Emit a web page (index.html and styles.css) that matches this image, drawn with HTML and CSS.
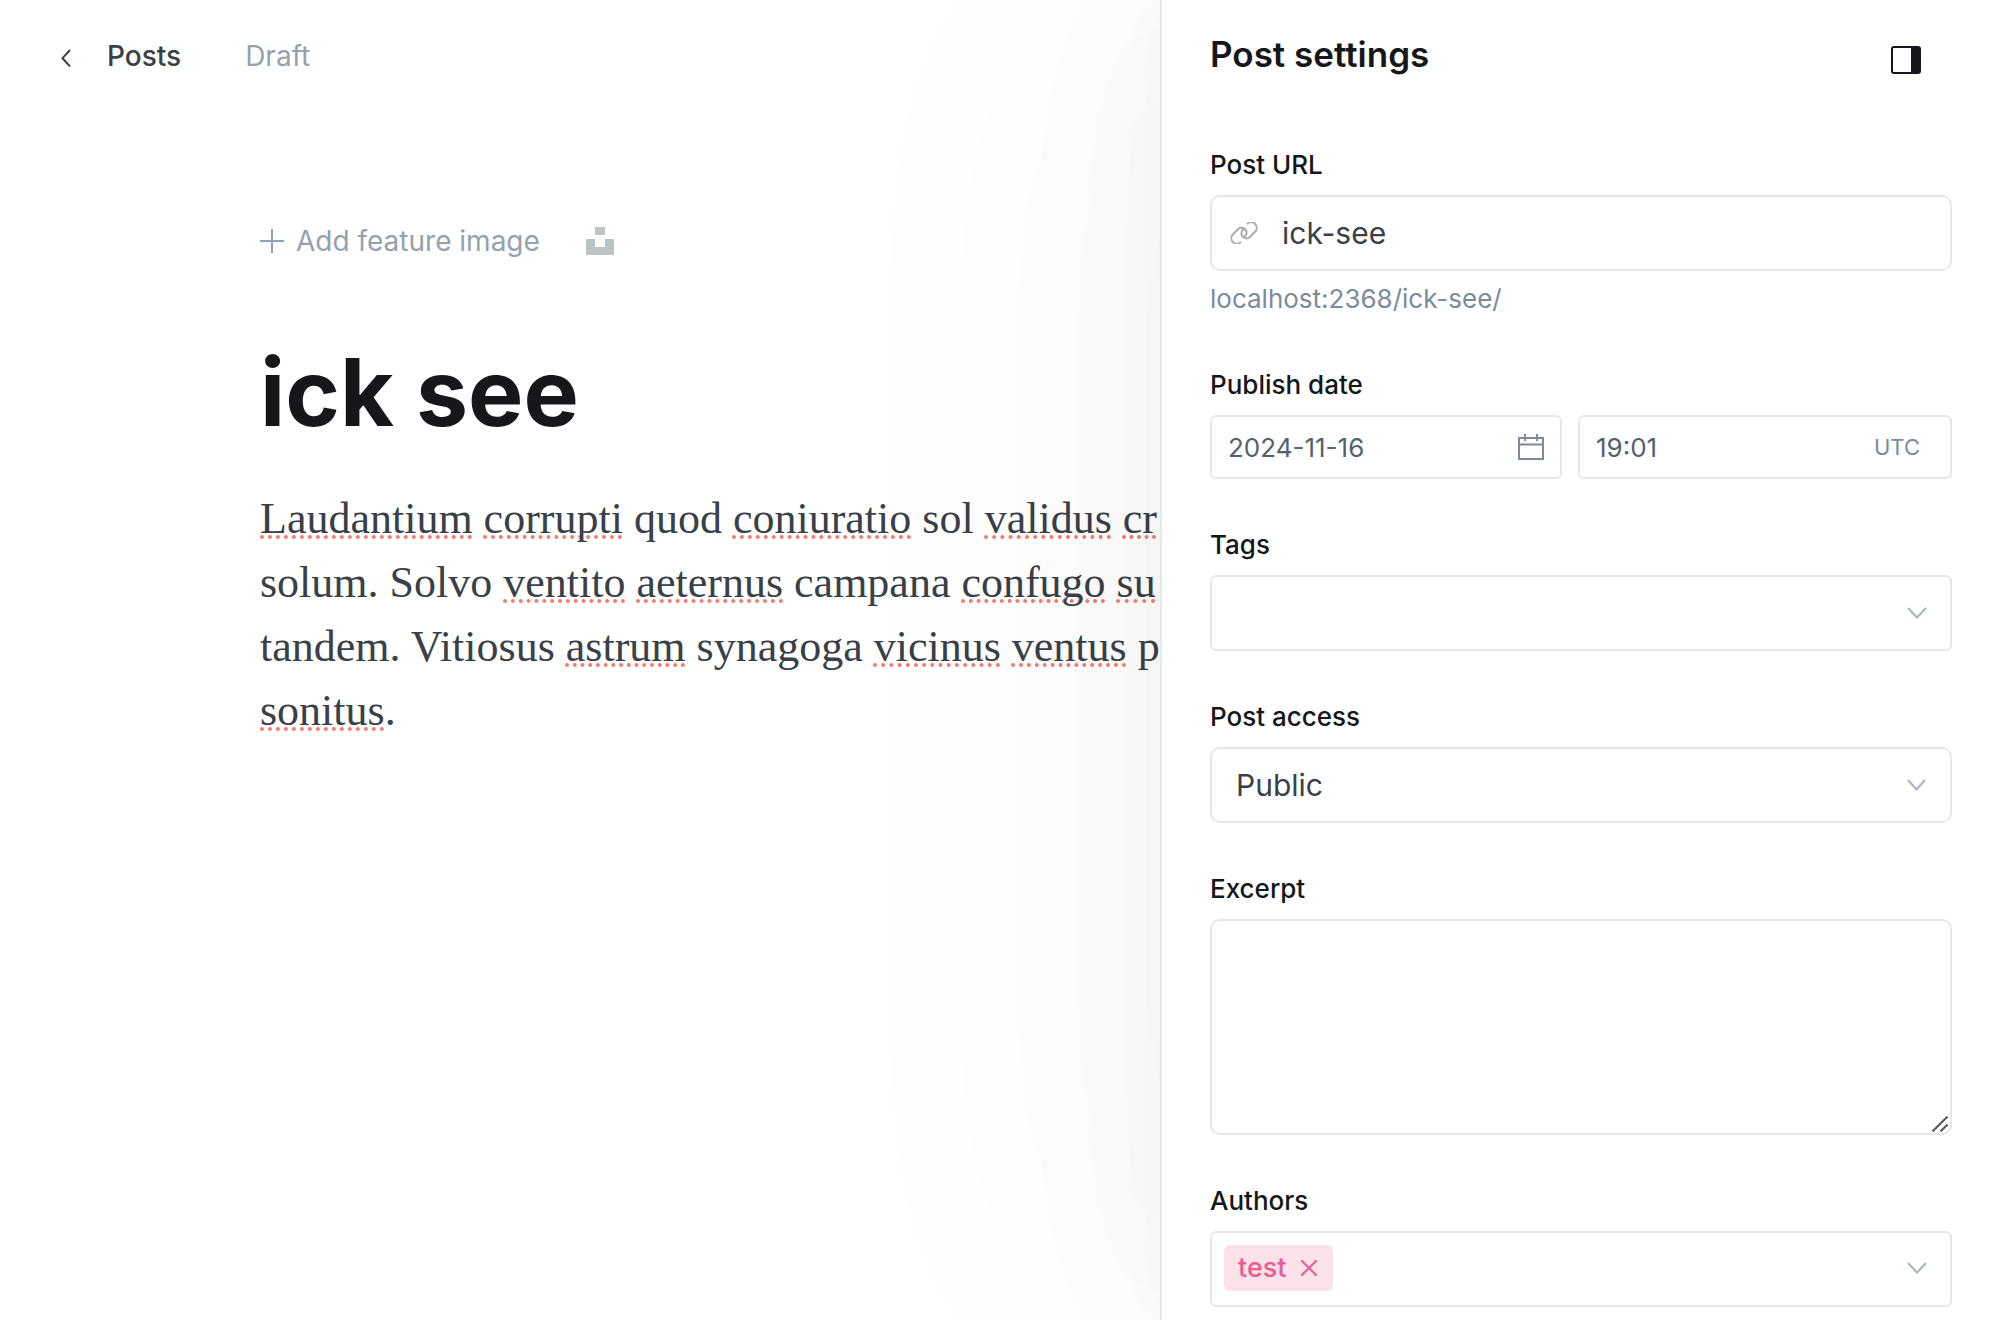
FILE: index.html
```
<!DOCTYPE html>
<html lang="en">
<head>
<meta charset="utf-8">
<meta name="viewport" content="width=device-width, initial-scale=1">
<title>Post settings</title>
<link rel="stylesheet" href="styles.css">
</head>
<body>
<div class="app">
  <main class="editor">
    <nav class="topbar">
      <a class="back" href="#">
        <svg class="icon" width="12" height="18" viewBox="0 0 12 18"><path d="M10 1 2.500 9.200 10 17.500"/></svg>
        <span>Posts</span>
      </a>
      <span class="status">Draft</span>
    </nav>
    <article class="post">
      <div class="feature">
        <button class="add-image" type="button">
          <svg class="icon" width="24" height="24" viewBox="0 0 24 24"><path d="M12 0v24M0 12h24"/></svg>
          <span>Add feature image</span>
        </button>
        <button class="unsplash" type="button" aria-label="Unsplash">
          <svg width="28" height="28" viewBox="0 0 28 28"><path fill="currentColor" d="M9 0h10v8H9zM0 12h9v8h10v-8h9v16H0z"/></svg>
        </button>
      </div>
      <h1 class="title">ick see</h1>
      <p class="copy"><u>Laudantium</u> <u>corrupti</u> quod <u>coniuratio</u> sol <u>validus</u> <u>cr</u><br>solum. Solvo <u>ventito</u> <u>aeternus</u> campana <u>confugo</u> <u>su</u><br>tandem. Vitiosus <u>astrum</u> synagoga <u>vicinus</u> <u>ventus</u> p<br><u>sonitus</u>.</p>
    </article>
  </main>

  <aside class="panel">
    <header class="panel-head">
      <h2>Post settings</h2>
      <button class="toggle" type="button" aria-label="Close settings">
        <svg width="30" height="28" viewBox="0 0 30 28"><rect x="1" y="1" width="28" height="26" rx="2" fill="none" stroke="currentColor" stroke-width="2"/><path fill="currentColor" d="M20 1h9v26h-9z"/></svg>
      </button>
    </header>

    <form class="fields">
      <div class="group">
        <label for="url">Post URL</label>
        <div class="box rounded">
          <svg class="icon link" width="28" height="22" viewBox="0 0 28 22"><path d="M11 20A5.600 5.600 0 0 1 2.300 13L8 7.200a5 5 0 0 1 8.500 4.300c-.3 1.800-1.500 2.800-3 3.200M17 2a5.600 5.600 0 0 1 8.700 7L20 14.800a5 5 0 0 1-8.500-4.300c.3-1.800 1.500-2.800 3-3.200"/></svg>
          <input id="url" type="text" value="ick-see">
        </div>
        <p class="hint">localhost:2368/ick-see/</p>
      </div>

      <div class="group">
        <label for="date">Publish date</label>
        <div class="pair">
          <div class="box short">
            <input id="date" type="text" value="2024-11-16">
            <svg class="icon calendar" width="26" height="26" viewBox="0 0 26 26"><path d="M1 4h24v21H1zM1 10.500h24M7 0v7M19 0v7"/></svg>
          </div>
          <div class="box short time">
            <input id="time" type="text" value="19:01" aria-label="Publish time">
            <span class="zone">UTC</span>
          </div>
        </div>
      </div>

      <div class="group">
        <label for="tags">Tags</label>
        <div class="box">
          <select id="tags"><option></option></select>
          <svg class="icon chevron" width="20" height="12" viewBox="0 0 20 12"><path d="m1 1 9 9.500L19 1"/></svg>
        </div>
      </div>

      <div class="group">
        <label for="access">Post access</label>
        <div class="box rounded">
          <select id="access"><option>Public</option></select>
          <svg class="icon chevron" width="20" height="12" viewBox="0 0 20 12"><path d="m1 1 8.500 9.500L18 1"/></svg>
        </div>
      </div>

      <div class="group">
        <label for="excerpt">Excerpt</label>
        <div class="box rounded tall">
          <textarea id="excerpt"></textarea>
          <svg class="grip" width="16" height="16" viewBox="0 0 16 16"><path d="M.5 15.500 15.500.5M8.500 15.500l7-7"/></svg>
        </div>
      </div>

      <div class="group">
        <label for="authors">Authors</label>
        <div class="box authors">
          <span class="token">test
            <button type="button" aria-label="Remove test">
              <svg class="icon" width="16" height="16" viewBox="0 0 16 16"><path d="m0 0 16 16M16 0 0 16"/></svg>
            </button>
          </span>
          <input id="authors" type="text">
          <svg class="icon chevron" width="20" height="12" viewBox="0 0 20 12"><path d="m1 1 9 9.500L19 1"/></svg>
        </div>
      </div>
    </form>
  </aside>
</div>
</body>
</html>
```
FILE: styles.css
```
* {
  box-sizing: border-box;
}

body {
  margin: 0;
  background: #fff;
  color: #15171a;
  font-family: Inter, "Liberation Sans", sans-serif;
  font-size: 26px;
  line-height: 32px;
}

h1, h2, p {
  margin: 0;
}

button, input, select, textarea {
  margin: 0;
  padding: 0;
  border: 0;
  outline: 0;
  background: none;
  color: inherit;
  font: inherit;
}

svg {
  display: block;
  flex: none;
}

.icon {
  fill: none;
  stroke: currentColor;
  stroke-width: 2;
}

.app {
  display: flex;
  height: 100vh;
  overflow: hidden;
}

/* Editor */

.editor {
  flex: 1;
  min-width: 0;
}

.topbar {
  display: flex;
  align-items: center;
  gap: 64px;
  padding: 40px 60px 0;
  font-size: 28px;
}

.back {
  display: flex;
  align-items: center;
  gap: 35px;
  color: #394047;
  font-weight: 500;
  text-decoration: none;
}

.back .icon {
  margin-top: 3px;
}

.status {
  color: #95a1af;
}

.post {
  padding: 153px 0 0 260px;
}

.feature {
  display: flex;
  align-items: center;
  gap: 46px;
  height: 32px;
  color: #95a1af;
  font-size: 28px;
}

.add-image {
  display: flex;
  align-items: center;
  gap: 12px;
}

.unsplash {
  color: #bcc3c6;
}

.title {
  margin-top: 79px;
  font-size: 93px;
  font-weight: 700;
  line-height: 112px;
}

.copy {
  margin-top: 39px;
  color: #394047;
  font-family: Georgia, "Liberation Serif", serif;
  font-size: 44px;
  line-height: 64px;
  white-space: nowrap;
}

.copy u {
  text-decoration: underline dotted #f47c70 4px;
  text-decoration-skip-ink: none;
  text-underline-offset: 2px;
}

/* Settings panel */

.panel {
  position: relative;
  width: 42%;
  padding: 32px 48px;
  border-left: 2px solid #e6e7e8;
  background: #fff;
  box-shadow: -140px 0 300px rgba(0, 0, 0, .025), 0 0 200px rgba(0, 0, 0, .03), 0 0 60px rgba(0, 0, 0, .025);
}

.panel-head {
  display: flex;
  align-items: flex-start;
  justify-content: space-between;
  height: 48px;
  padding-right: 31px;
}

.panel-head h2 {
  font-size: 35px;
  font-weight: 600;
  line-height: 44px;
}

.toggle {
  padding-top: 14px;
}

.fields {
  display: grid;
  grid-template-columns: minmax(0, 1fr);
  gap: 50px;
  padding-top: 69px;
}

.group label {
  display: block;
  margin-bottom: 14px;
  font-weight: 500;
}

.box {
  position: relative;
  display: flex;
  align-items: center;
  height: 76px;
  border: 2px solid #e6e7e8;
  border-radius: 6px;
  color: #394047;
  font-size: 30px;
}

.rounded {
  border-radius: 10px;
}

.box input,
.box select,
.box textarea {
  flex: 1;
  min-width: 0;
  height: 100%;
}

.box select {
  padding-left: 24px;
  appearance: none;
}

.link {
  margin: 0 24px 0 18px;
  color: #aeaeae;
}

.hint {
  margin-top: 7px;
  color: #7c8b9a;
  line-height: 41px;
}

.pair {
  display: grid;
  grid-template-columns: minmax(0, 352fr) minmax(0, 374fr);
  gap: 16px;
}

.short {
  height: 64px;
  padding: 0 16px;
  color: #54616d;
  font-size: 26px;
}

.calendar {
  color: #7c8b9a;
}

.zone {
  margin-right: 14px;
  color: #7c8b9a;
  font-size: 22px;
}

.chevron {
  position: absolute;
  right: 23px;
  color: #abb4be;
  pointer-events: none;
}

.tall {
  height: 216px;
}

.tall textarea {
  resize: none;
}

.grip {
  position: absolute;
  right: 2px;
  bottom: 1px;
  fill: none;
  stroke: #555;
  stroke-width: 2;
}

.authors {
  padding: 0 12px 2px;
}

.token {
  display: flex;
  align-items: center;
  gap: 14px;
  height: 46px;
  padding: 0 16px 0 14px;
  border-radius: 6px;
  background: #fbe1ea;
  color: #eb5b91;
  font-size: 27px;
  font-weight: 500;
}
```
